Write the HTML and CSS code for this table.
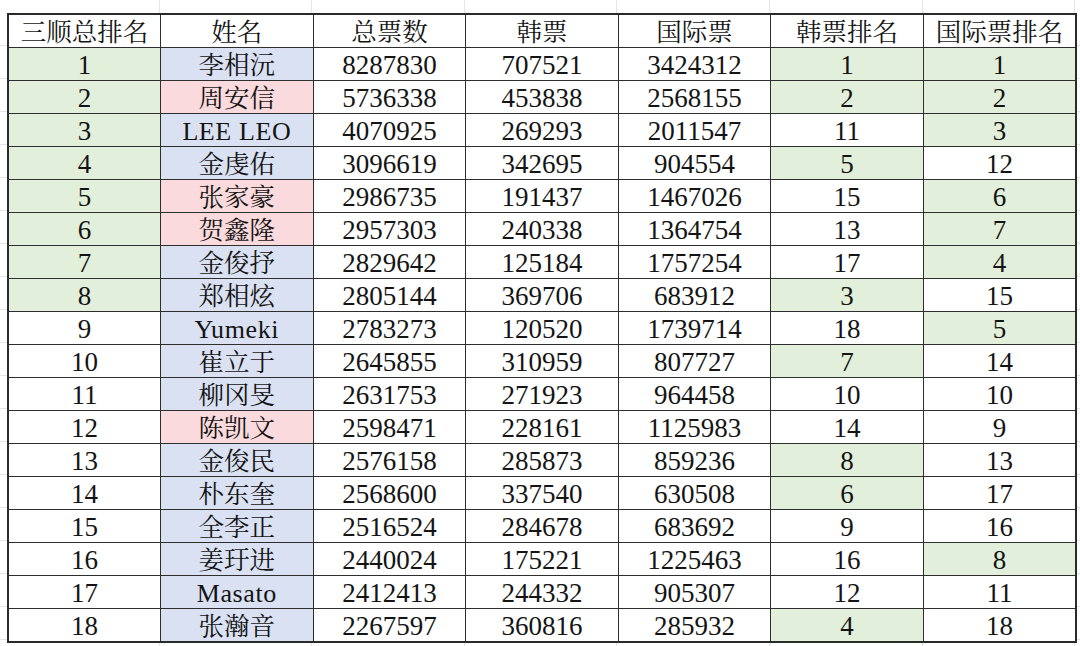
FILE: index.html
```html
<!DOCTYPE html>
<html lang="zh">
<head>
<meta charset="utf-8">
<title>三顺总排名</title>
<link rel="stylesheet" href="styles.css">
</head>
<body>
<div class="sheet">
<table class="grid">
<colgroup><col><col><col><col><col><col><col></colgroup>
<thead>
<tr><th>三顺总排名</th><th>姓名</th><th>总票数</th><th>韩票</th><th>国际票</th><th>韩票排名</th><th>国际票排名</th></tr>
</thead>
<tbody>
<tr><td class="g">1</td><td class="b cn">李相沅</td><td>8287830</td><td>707521</td><td>3424312</td><td class="g">1</td><td class="g">1</td></tr>
<tr><td class="g">2</td><td class="p cn">周安信</td><td>5736338</td><td>453838</td><td>2568155</td><td class="g">2</td><td class="g">2</td></tr>
<tr><td class="g">3</td><td class="b lat">LEE LEO</td><td>4070925</td><td>269293</td><td>2011547</td><td>11</td><td class="g">3</td></tr>
<tr><td class="g">4</td><td class="b cn">金虔佑</td><td>3096619</td><td>342695</td><td>904554</td><td class="g">5</td><td>12</td></tr>
<tr><td class="g">5</td><td class="p cn">张家豪</td><td>2986735</td><td>191437</td><td>1467026</td><td>15</td><td class="g">6</td></tr>
<tr><td class="g">6</td><td class="p cn">贺鑫隆</td><td>2957303</td><td>240338</td><td>1364754</td><td>13</td><td class="g">7</td></tr>
<tr><td class="g">7</td><td class="b cn">金俊抒</td><td>2829642</td><td>125184</td><td>1757254</td><td>17</td><td class="g">4</td></tr>
<tr><td class="g">8</td><td class="b cn">郑相炫</td><td>2805144</td><td>369706</td><td>683912</td><td class="g">3</td><td>15</td></tr>
<tr><td>9</td><td class="b lat">Yumeki</td><td>2783273</td><td>120520</td><td>1739714</td><td>18</td><td class="g">5</td></tr>
<tr><td>10</td><td class="b cn">崔立于</td><td>2645855</td><td>310959</td><td>807727</td><td class="g">7</td><td>14</td></tr>
<tr><td>11</td><td class="b cn">柳冈旻</td><td>2631753</td><td>271923</td><td>964458</td><td>10</td><td>10</td></tr>
<tr><td>12</td><td class="p cn">陈凯文</td><td>2598471</td><td>228161</td><td>1125983</td><td>14</td><td>9</td></tr>
<tr><td>13</td><td class="b cn">金俊民</td><td>2576158</td><td>285873</td><td>859236</td><td class="g">8</td><td>13</td></tr>
<tr><td>14</td><td class="b cn">朴东奎</td><td>2568600</td><td>337540</td><td>630508</td><td class="g">6</td><td>17</td></tr>
<tr><td>15</td><td class="b cn">全李正</td><td>2516524</td><td>284678</td><td>683692</td><td>9</td><td>16</td></tr>
<tr><td>16</td><td class="b cn">姜玗进</td><td>2440024</td><td>175221</td><td>1225463</td><td>16</td><td class="g">8</td></tr>
<tr><td>17</td><td class="b lat">Masato</td><td>2412413</td><td>244332</td><td>905307</td><td>12</td><td>11</td></tr>
<tr><td>18</td><td class="b cn">张瀚音</td><td>2267597</td><td>360816</td><td>285932</td><td class="g">4</td><td>18</td></tr>
</tbody>
</table>
</div>
</body>
</html>
```

FILE: styles.css
```css
html, body {
  margin: 0;
  padding: 0;
  background: #ffffff;
}

.sheet {
  width: 1080px;
  height: 646px;
  box-sizing: border-box;
  padding: 13px 0 0 7px;
  background-color: #ffffff;
  background-image:
    repeating-linear-gradient(to right, transparent 0, transparent 151.6px, #e4e4e4 151.6px, #e4e4e4 152.6px),
    repeating-linear-gradient(to bottom, transparent 0, transparent 32px, #e4e4e4 32px, #e4e4e4 33px);
  background-position: 7px 0, 0 13px;
  overflow: hidden;
}

.grid {
  border-collapse: collapse;
  table-layout: fixed;
  width: 1068px;
  border: 2px solid #2a2a2a;
  background: #ffffff;
  font-family: "Liberation Serif", "Noto Serif CJK SC", "Noto Sans CJK SC", serif;
  color: #141414;
}

.grid col {
  width: 152.57px;
}

.grid tr {
  height: 33px;
}

.grid th,
.grid td {
  border: 1px solid #2e2e2e;
  padding: 3px 0 0 0;
  text-align: center;
  vertical-align: middle;
  line-height: 27px;
  height: 29px;
  white-space: nowrap;
  overflow: hidden;
  font-weight: normal;
  font-size: 27px;
}

.grid th {
  font-size: 25.5px;
  font-weight: normal;
}

.grid td.cn {
  font-size: 25.5px;
}

.grid td.lat {
  font-size: 26px;
  letter-spacing: 0.6px;
}

.g { background: #e2efda; }
.b { background: #d9e1f2; }
.p { background: #fadadd; }
```
